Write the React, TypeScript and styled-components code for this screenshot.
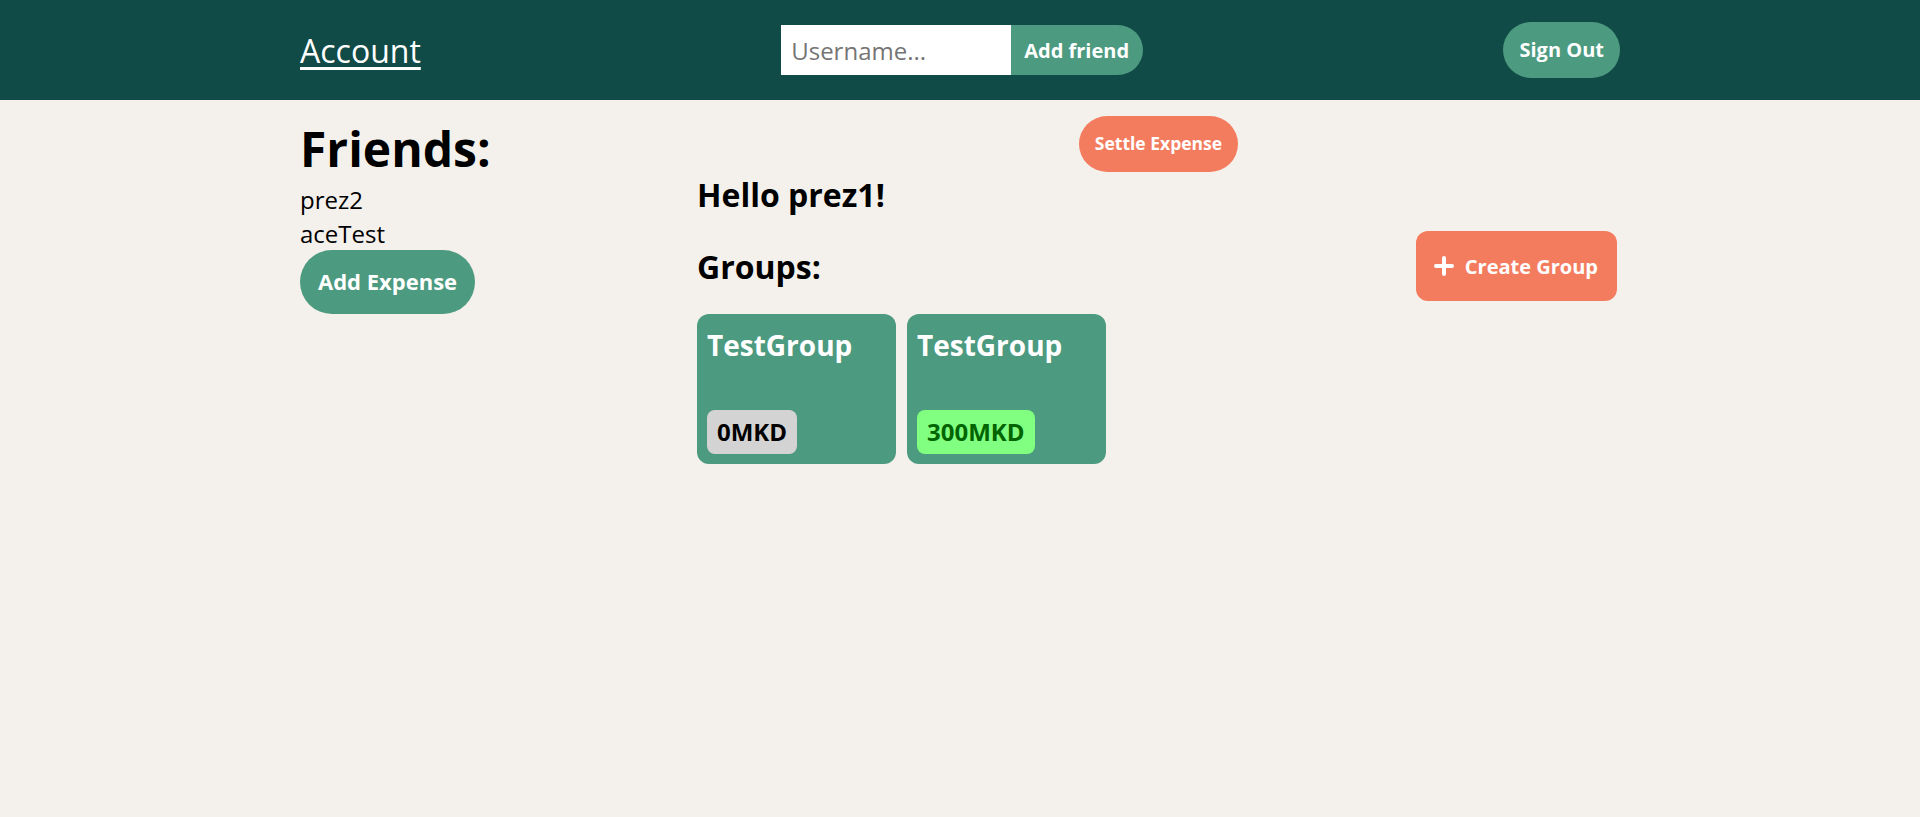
import { createGlobalStyle, styled } from "styled-components";

const GlobalStyle = createGlobalStyle`
  * {
    box-sizing: border-box;
  }

  body {
    margin: 0;
    background-color: #f4f1ec;
    font-family: "Open Sans", "Noto Sans", sans-serif;
    color: #000;
  }
`;

const StyledHeader = styled.header`
  height: 100px;
  background-color: #114b47;
`;

const StyledHeaderInner = styled.div`
  width: 1320px;
  height: 100%;
  margin: 0 auto;

  display: flex;
  align-items: center;
  justify-content: space-between;
`;

const StyledAccount = styled.a`
  color: #fff;
  font-size: 32px;
  text-decoration: underline;
  text-underline-offset: 4px;
  cursor: pointer;
`;

const StyledForm = styled.form`
  display: flex;
  align-items: stretch;
  height: 50px;
`;

const StyledInput = styled.input`
  width: 230px;
  border: none;
  outline: none;
  padding: 0 10px;
  font-family: inherit;
  font-size: 24px;
  background-color: #fff;

  &::placeholder {
    color: #757575;
  }
`;

const StyledAddFriend = styled.button`
  border: none;
  padding: 0 14px 0 13px;
  border-radius: 0 25px 25px 0;
  background-color: #4c9a7f;
  color: #fff;
  font-family: inherit;
  font-size: 20px;
  font-weight: 700;
  cursor: pointer;
`;

const StyledPillButton = styled.button<{ $color: string; $size: number; $pad: string }>`
  border: none;
  padding: ${(p) => p.$pad};
  border-radius: 999px;
  background-color: ${(p) => p.$color};
  color: #fff;
  font-family: inherit;
  font-size: ${(p) => p.$size}px;
  font-weight: 700;
  line-height: 1.36;
  white-space: nowrap;
  cursor: pointer;
`;

const StyledMain = styled.main`
  width: 1320px;
  margin: 0 auto;
  padding-top: 16px;

  display: grid;
  grid-template-columns: 397px 1fr;
`;

const StyledFriends = styled.section`
  display: flex;
  flex-direction: column;
  align-items: flex-start;
`;

const StyledTitle = styled.h1`
  margin: 0 0 2px;
  font-size: 48px;
  font-weight: 700;
  line-height: 1.36;
`;

const StyledFriend = styled.div`
  font-size: 24px;
  line-height: 1.4;
`;

const StyledContent = styled.section`
  display: flex;
  flex-direction: column;
`;

const StyledSettleRow = styled.div`
  display: flex;
  justify-content: center;
`;

const StyledHeading = styled.h2`
  margin: 0;
  font-size: 32px;
  font-weight: 700;
  line-height: 1.36;
`;

const StyledHello = styled(StyledHeading)`
  margin-top: 1px;
`;

const StyledGroupsRow = styled.div`
  margin-top: 15px;
  display: flex;
  align-items: center;
  justify-content: space-between;
  padding-right: 3px;
`;

const StyledCreateGroup = styled.button`
  display: flex;
  align-items: center;
  gap: 11px;
  height: 70px;
  padding: 0 19px 0 18px;
  border: none;
  border-radius: 12px;
  background-color: #f47c5e;
  color: #fff;
  font-family: inherit;
  font-size: 20px;
  font-weight: 700;
  cursor: pointer;
`;

const StyledGroups = styled.div`
  margin-top: 13px;
  display: flex;
  gap: 11px;
`;

const StyledCard = styled.div`
  width: 199px;
  height: 150px;
  padding: 12px 10px 10px;
  border-radius: 12px;
  background-color: #4c9a7f;

  display: flex;
  flex-direction: column;
  justify-content: space-between;
  align-items: flex-start;
`;

const StyledCardName = styled.div`
  color: #fff;
  font-size: 28px;
  font-weight: 700;
  line-height: 1.36;
`;

const StyledBalance = styled.div<{ $positive: boolean }>`
  padding: 6px 10px;
  border-radius: 8px;
  background-color: ${(p) => (p.$positive ? "#80ff80" : "#d3d3d3")};
  color: ${(p) => (p.$positive ? "#006400" : "#000")};
  font-size: 24px;
  font-weight: 700;
  line-height: 1.36;
`;

const friends = ["prez2", "aceTest"];

const groups = [
  { name: "TestGroup", balance: 0 },
  { name: "TestGroup", balance: 300 },
];

function PlusIcon() {
  return (
    <svg width="20" height="20" viewBox="0 0 20 20">
      <path d="M10 2v16M2 10h16" stroke="#fff" strokeWidth="4" strokeLinecap="round" />
    </svg>
  );
}

export default function App() {
  return (
    <>
      <GlobalStyle />
      <StyledHeader>
        <StyledHeaderInner>
          <StyledAccount>Account</StyledAccount>
          <StyledForm onSubmit={(e) => e.preventDefault()}>
            <StyledInput placeholder="Username..." />
            <StyledAddFriend type="submit">Add friend</StyledAddFriend>
          </StyledForm>
          <StyledPillButton $color="#4c9a7f" $size={20} $pad="14px 16px">
            Sign Out
          </StyledPillButton>
        </StyledHeaderInner>
      </StyledHeader>

      <StyledMain>
        <StyledFriends>
          <StyledTitle>Friends:</StyledTitle>
          {friends.map((f) => (
            <StyledFriend key={f}>{f}</StyledFriend>
          ))}
          <StyledPillButton $color="#4c9a7f" $size={22} $pad="17px 18px">
            Add Expense
          </StyledPillButton>
        </StyledFriends>

        <StyledContent>
          <StyledSettleRow>
            <StyledPillButton $color="#f47c5e" $size={17.5} $pad="16px 16px">
              Settle Expense
            </StyledPillButton>
          </StyledSettleRow>
          <StyledHello>Hello prez1!</StyledHello>
          <StyledGroupsRow>
            <StyledHeading>Groups:</StyledHeading>
            <StyledCreateGroup>
              <PlusIcon />
              Create Group
            </StyledCreateGroup>
          </StyledGroupsRow>
          <StyledGroups>
            {groups.map((g, i) => (
              <StyledCard key={i}>
                <StyledCardName>{g.name}</StyledCardName>
                <StyledBalance $positive={g.balance > 0}>{g.balance}MKD</StyledBalance>
              </StyledCard>
            ))}
          </StyledGroups>
        </StyledContent>
      </StyledMain>
    </>
  );
}
